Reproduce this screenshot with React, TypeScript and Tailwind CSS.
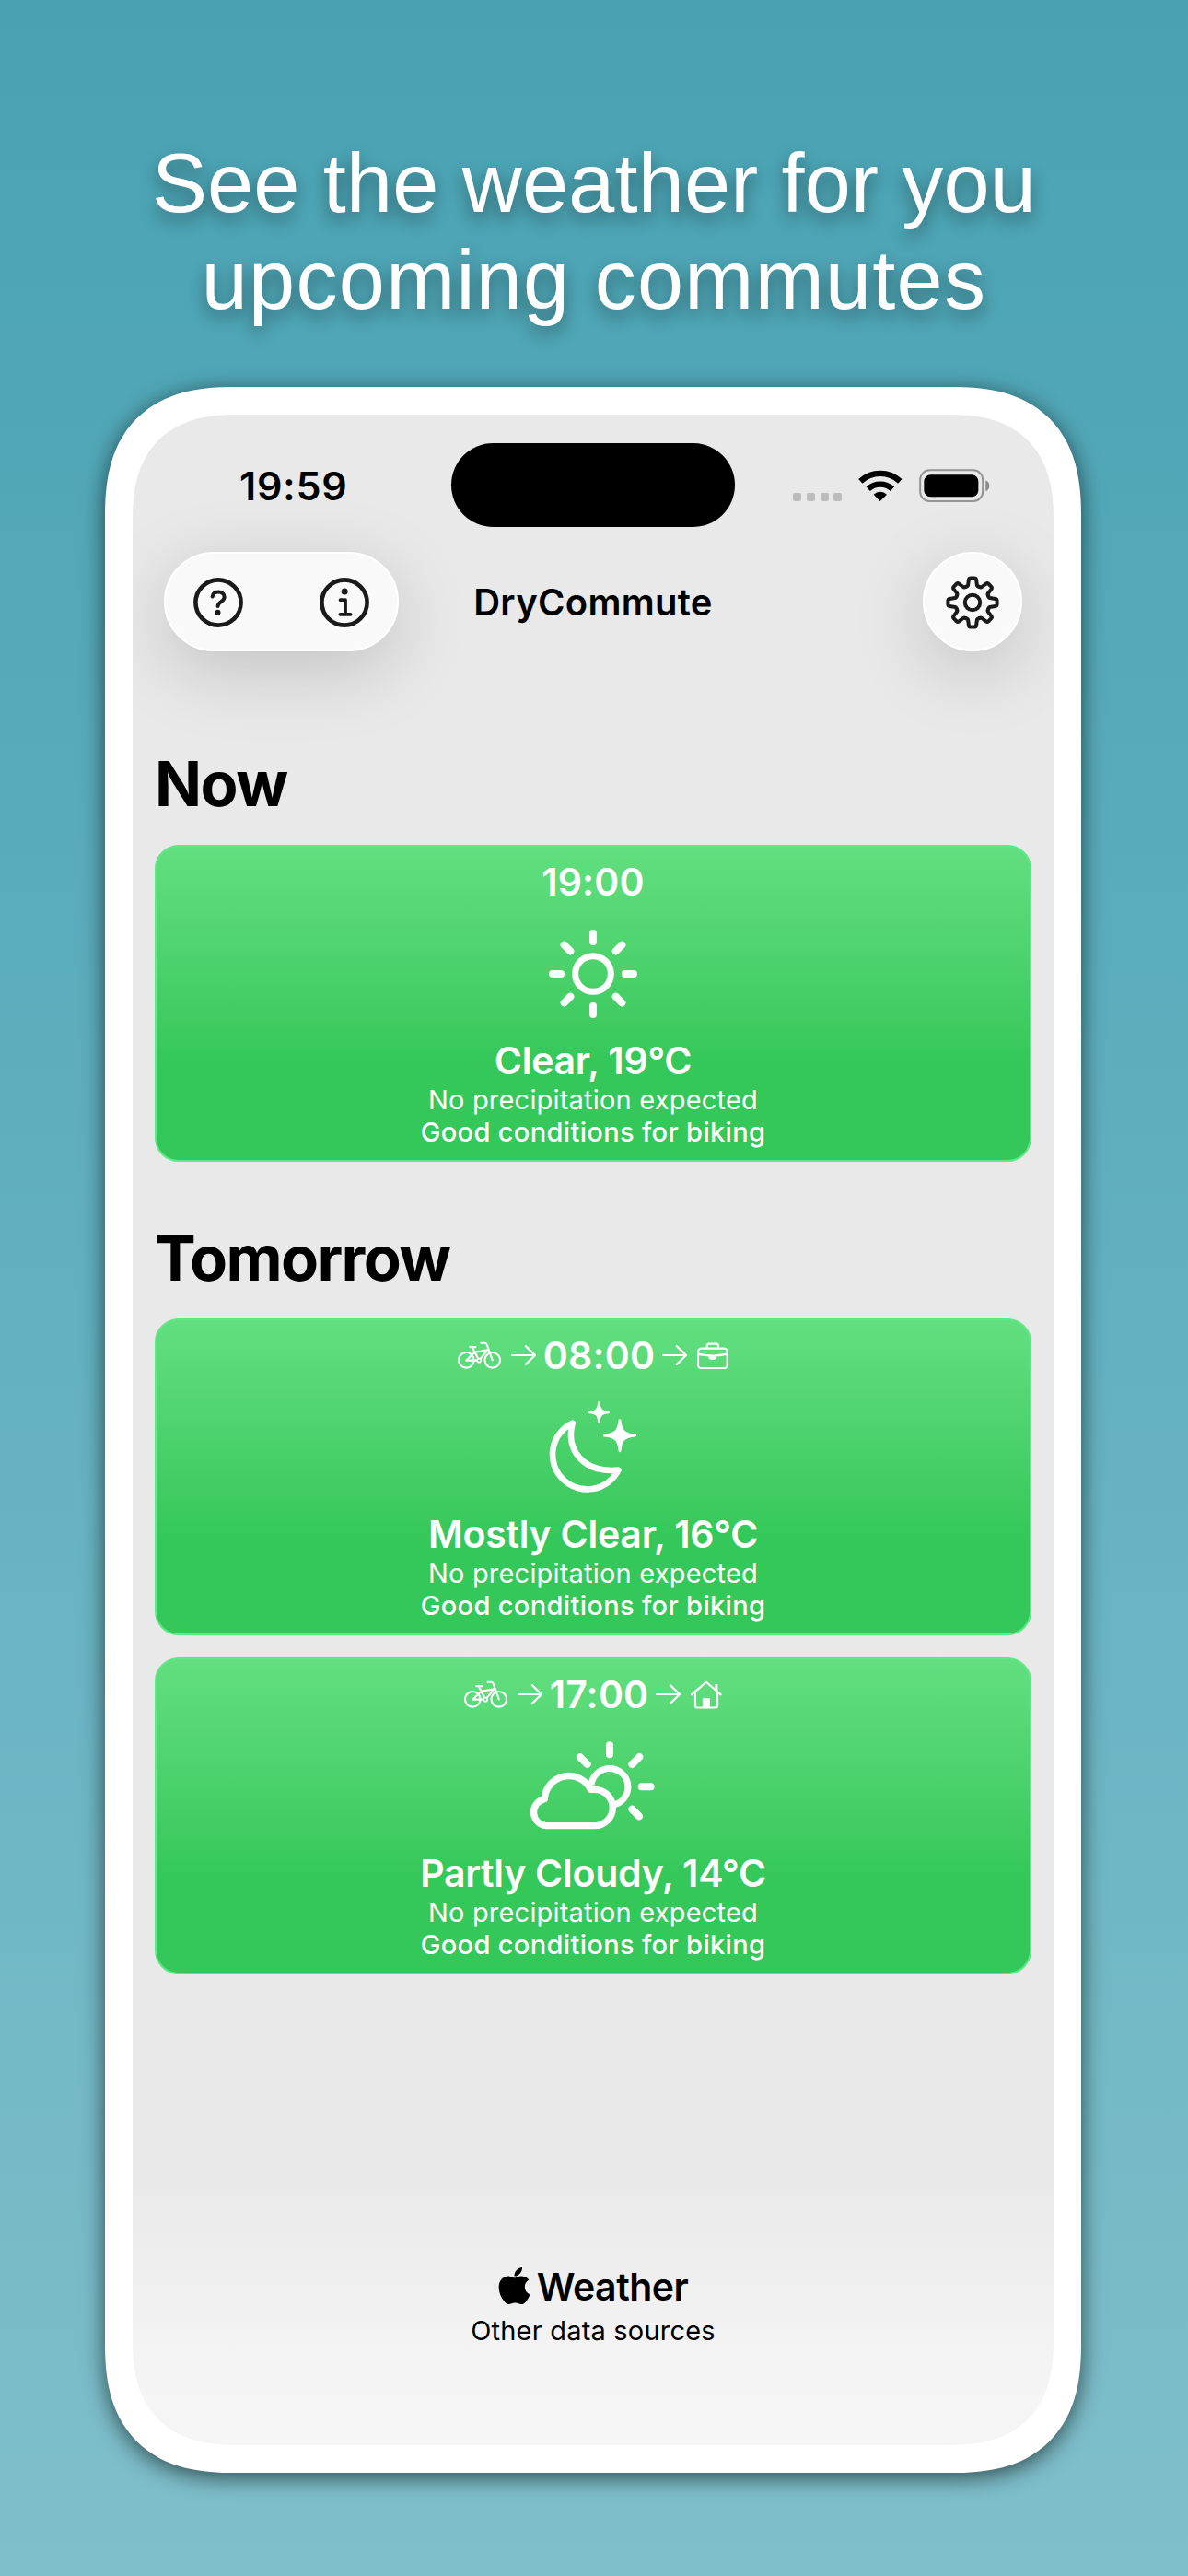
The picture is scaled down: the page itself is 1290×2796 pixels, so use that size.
import { FaApple } from "react-icons/fa"
import type { ReactNode } from "react"

interface CommuteCardProps {
  time: string
  destination?: ReactNode
  icon: ReactNode
  summary: string
}

const SunIcon = () => (
  <svg className="mt-px size-24" viewBox="498 327 288 288" fill="none" stroke="white" strokeLinecap="round">
    <circle cx="642" cy="471" r="58" strokeWidth="21" />
    <path
      strokeWidth="24"
      d="M642 339V366M642 576V603M510 471H537M747 471H774M548 377L568 397M716 545L736 565M736 377L716 397M568 545L548 565"
    />
  </svg>
)

const MoonStarsIcon = () => (
  <svg className="h-[99px] w-24" viewBox="438 306 288 297" fill="none" stroke="white" strokeLinejoin="round">
    <path strokeWidth="20" d="M515 377A113 113 0 1 0 664 530C548 540 492 462 515 377Z" />
    <path
      fill="white"
      strokeWidth="7"
      d="M601 310C603 334 609 340 633 342C609 344 603 350 601 373C599 350 593 344 570 342C593 340 599 334 601 310Z"
    />
    <path
      fill="white"
      strokeWidth="9"
      d="M669 368C672 403 683 414 719 417C683 420 672 431 669 467C666 431 655 420 619 417C655 414 666 403 669 368Z"
    />
  </svg>
)

const CloudSunIcon = () => (
  <svg className="mr-[4px] h-24 w-[137px]" viewBox="375 300 411 288" fill="none" stroke="white">
    <path
      strokeWidth="24"
      strokeLinecap="round"
      d="M639 313V343M736 351L712 375M743 448H773M712 521L735 544M543 352L566 375"
    />
    <path strokeWidth="21" d="M579 442A60 60 0 1 1 656 506" />
    <path
      strokeWidth="22"
      strokeLinejoin="round"
      d="M432 575H590A59 59 0 0 0 590 457L577 457A79 79 0 0 0 427 488A44 44 0 0 0 432 575Z"
    />
  </svg>
)

const BikeIcon = () => (
  <svg className="h-[30px] w-[47px]" viewBox="142 110 142 90" fill="none" stroke="white" strokeWidth="6.5" strokeLinecap="round" strokeLinejoin="round">
    <circle cx="170" cy="171" r="25" />
    <circle cx="256" cy="171" r="25" />
    <path d="M182 128H201M190 129L212 172H170L198 145L240 138L212 172M219 115H231Q236 115 238 121L256 171" />
    <circle cx="212" cy="172" r="6" fill="#5ad87a" strokeWidth="5" />
  </svg>
)

const ArrowIcon = () => (
  <svg className="h-6 w-[27px]" viewBox="316 118 82 72" fill="none" stroke="white" strokeWidth="6.5" strokeLinecap="round" strokeLinejoin="round">
    <path d="M319 154H395M364 124L395 154L364 184" />
  </svg>
)

const BriefcaseIcon = () => (
  <svg className="h-[29px] w-[34px]" viewBox="923 111 102 87" fill="none" stroke="white" strokeWidth="6.5">
    <rect x="926" y="131" width="95" height="64" rx="10" />
    <path d="M955 130V123Q955 116 962 116H985Q992 116 992 123V130M926 149Q974 160 1021 149" />
    <path d="M960 155H987V159Q987 167 979 167H968Q960 167 960 159Z" fill="white" stroke="none" />
  </svg>
)

const HouseIcon = () => (
  <svg className="h-[31px] w-[34px]" viewBox="904 100 103 93" fill="none" stroke="white" strokeWidth="6.5" strokeLinecap="round" strokeLinejoin="round">
    <path d="M907 146L955 105L1003 146M919 140V182Q919 189 926 189H985Q992 189 992 182V140" />
    <path d="M943 190V161Q943 157 947 157H963Q967 157 967 161V190ZM984 112H993V138L984 130Z" fill="white" stroke="none" />
  </svg>
)

const WifiIcon = () => (
  <svg className="h-[35px] w-12" viewBox="696 323 144 105" fill="none" stroke="black" strokeWidth="19">
    <path d="M703 363A94 94 0 0 1 832 363M728 388A59 59 0 0 1 807 388" />
    <path d="M767 428L746 406A31 31 0 0 1 789 406Z" fill="black" stroke="none" />
  </svg>
)

const BatteryIcon = () => (
  <svg className="h-9 w-[77px]" viewBox="893 322 231 108" fill="none">
    <rect x="896.5" y="326" width="204" height="101" rx="31" stroke="#949494" strokeWidth="6" />
    <rect x="909" y="341" width="177" height="72" rx="21" fill="black" />
    <path d="M1110 359Q1122 365 1122 377T1110 395Z" fill="#8a8a8a" />
  </svg>
)

const QuestionIcon = () => (
  <svg className="size-[54px]" viewBox="0 0 54 54" fill="none" stroke="#1a1a1a" strokeWidth="4.6" strokeLinecap="round" strokeLinejoin="round">
    <circle cx="27" cy="27" r="24.6" />
    <path d="M20.6 20.6C21.2 17.3 23.5 15.6 27 15.6C31 15.6 33.6 17.8 33.6 21.2C33.6 26 26.6 26.2 26.6 31" strokeWidth="4" />
    <circle cx="26.5" cy="37.8" r="3" fill="#1a1a1a" stroke="none" />
  </svg>
)

const InfoIcon = () => (
  <svg className="size-[54px]" viewBox="0 0 54 54" fill="none" stroke="#1a1a1a" strokeWidth="4.6" strokeLinecap="round" strokeLinejoin="round">
    <circle cx="27" cy="27" r="24.6" />
    <path d="M22.6 24.2H28V39.6M22.4 39.8H33.6" strokeWidth="3.8" />
    <circle cx="27.2" cy="15" r="3.5" fill="#1a1a1a" stroke="none" />
  </svg>
)

const tooth =
  "M21.9 11.8L23.4 11.2Q24 10.9 24.1 10.2L24.9 4.2Q25.2 2.4 27 2.4H31Q32.8 2.4 33.1 4.2L33.9 10.2Q34 10.9 34.6 11.2L36.1 11.8"

const GearIcon = () => (
  <svg className="size-[58px]" viewBox="0 0 58 58" fill="none" stroke="#1a1a1a" strokeWidth="4" strokeLinecap="round" strokeLinejoin="round">
    <circle cx="29" cy="29" r="8.2" />
    {[0, 45, 90, 135, 180, 225, 270, 315].map((angle) => (
      <path key={angle} d={tooth} transform={`rotate(${angle} 29 29)`} />
    ))}
  </svg>
)

const StatusBar = () => (
  <div className="flex h-[91px] items-center">
    <p className="w-[346px] pt-[2px] pl-[116px] text-[43px] font-semibold leading-none tracking-[0.7px]">19:59</p>
    <div className="h-[91px] w-[308px] rounded-full bg-black" />
    <div className="ml-[63px] flex h-9 items-center">
      <div className="mt-[25px] flex gap-[5.8px]">
        {[0, 1, 2, 3].map((dot) => (
          <span key={dot} className="size-[9px] rounded-[2px] bg-[#bcbcbc]" />
        ))}
      </div>
      <div className="ml-[18px]">
        <WifiIcon />
      </div>
      <div className="ml-[18px]">
        <BatteryIcon />
      </div>
    </div>
  </div>
)

const NavBar = () => (
  <div className="relative mt-[27px] flex h-[108px] items-center justify-between px-[34px]">
    <div className="flex h-[108px] w-[255px] items-center justify-between rounded-full border-2 border-white bg-[#f9f9f9] px-[30px] pt-[2px] shadow-[0_20px_80px_rgba(0,0,0,0.17)]">
      <QuestionIcon />
      <InfoIcon />
    </div>
    <h1 className="absolute inset-x-0 pt-[2px] text-center text-[40px] font-semibold leading-none tracking-[0.3px]">
      DryCommute
    </h1>
    <div className="flex size-[108px] items-center justify-center rounded-full border-2 border-white bg-[#f9f9f9] pt-[2px] shadow-[0_20px_80px_rgba(0,0,0,0.17)]">
      <GearIcon />
    </div>
  </div>
)

const CommuteCard = ({ time, destination, icon, summary }: CommuteCardProps) => {
  return (
    <div className="flex h-[344px] flex-col items-center rounded-[26px] border-2 border-[#5fe886] bg-linear-to-b from-[#62df80] to-[#34c759] to-70% text-white">
      <div className="mt-[13px] flex h-[50px] items-center gap-[11px]">
        {destination && (
          <>
            <BikeIcon />
            <ArrowIcon />
          </>
        )}
        <p className="-mx-[3px] text-[41px] font-semibold leading-[50px] tracking-[0.2px]">{time}</p>
        {destination && (
          <>
            <ArrowIcon />
            {destination}
          </>
        )}
      </div>
      <div className="mt-[21px] flex h-[106px] items-center">{icon}</div>
      <h3 className="mt-[17px] text-[41px] font-semibold leading-[50px] tracking-[-0.25px]">{summary}</h3>
      <p className="text-[29px] leading-[35px] tracking-[0.2px]">No precipitation expected</p>
      <p className="text-[29px] font-medium leading-[35px] tracking-[0.35px]">Good conditions for biking</p>
    </div>
  )
}

const App = () => {
  return (
    <main className="flex h-[2796px] w-[1290px] flex-col items-center bg-linear-to-b from-[#48a2b2] via-[#62b0c0] to-[#7fbfca] font-['Inter',sans-serif] text-black">
      <h2 className="mt-[147px] h-[273px] text-center font-['Liberation_Sans',sans-serif] text-[90px] leading-[105px] text-white [text-shadow:0_8px_18px_rgba(0,0,0,0.4)]">
        <span className="block tracking-[0.2px]">See the weather for you</span>
        <span className="block tracking-[1.3px]">upcoming commutes</span>
      </h2>
      <div className="mr-[2px] h-[2264px] w-[1060px] rounded-[122px] bg-white p-[30px] shadow-[0_5px_24px_rgba(0,0,0,0.6)] supports-[corner-shape:squircle]:rounded-[140px] supports-[corner-shape:squircle]:[corner-shape:superellipse(1.3)]">
        <div className="flex h-[2204px] flex-col overflow-hidden rounded-[98px] bg-linear-to-b from-[#e9e9e9] from-87% via-[#f3f3f3] via-95% to-[#f6f6f6] pt-[31px] supports-[corner-shape:squircle]:rounded-[114px] supports-[corner-shape:squircle]:[corner-shape:superellipse(1.3)]">
          <StatusBar />
          <NavBar />
          <section className="px-6 pt-[102px]">
            <h2 className="text-[67px] font-bold leading-[84px] tracking-[-1.5px]">Now</h2>
            <div className="mt-[24px]">
              <CommuteCard time="19:00" icon={<SunIcon />} summary="Clear, 19°C" />
            </div>
          </section>
          <section className="px-6 pt-[63px]">
            <h2 className="text-[67px] font-bold leading-[84px] tracking-[-1.6px]">Tomorrow</h2>
            <div className="mt-[23px] flex flex-col gap-6">
              <CommuteCard
                time="08:00"
                destination={<BriefcaseIcon />}
                icon={<MoonStarsIcon />}
                summary="Mostly Clear, 16°C"
              />
              <CommuteCard
                time="17:00"
                destination={<HouseIcon />}
                icon={<CloudSunIcon />}
                summary="Partly Cloudy, 14°C"
              />
            </div>
          </section>
          <footer className="mt-[314px] flex flex-col items-center">
            <div className="flex items-center gap-[7px]">
              <FaApple className="mb-[2px] h-[46px] w-[35px]" />
              <p className="text-[41px] font-semibold leading-[50px] tracking-[-0.5px]">Weather</p>
            </div>
            <p className="mt-[5px] text-[29px] leading-[35px] tracking-[0.2px]">Other data sources</p>
          </footer>
        </div>
      </div>
    </main>
  )
}

export default App
